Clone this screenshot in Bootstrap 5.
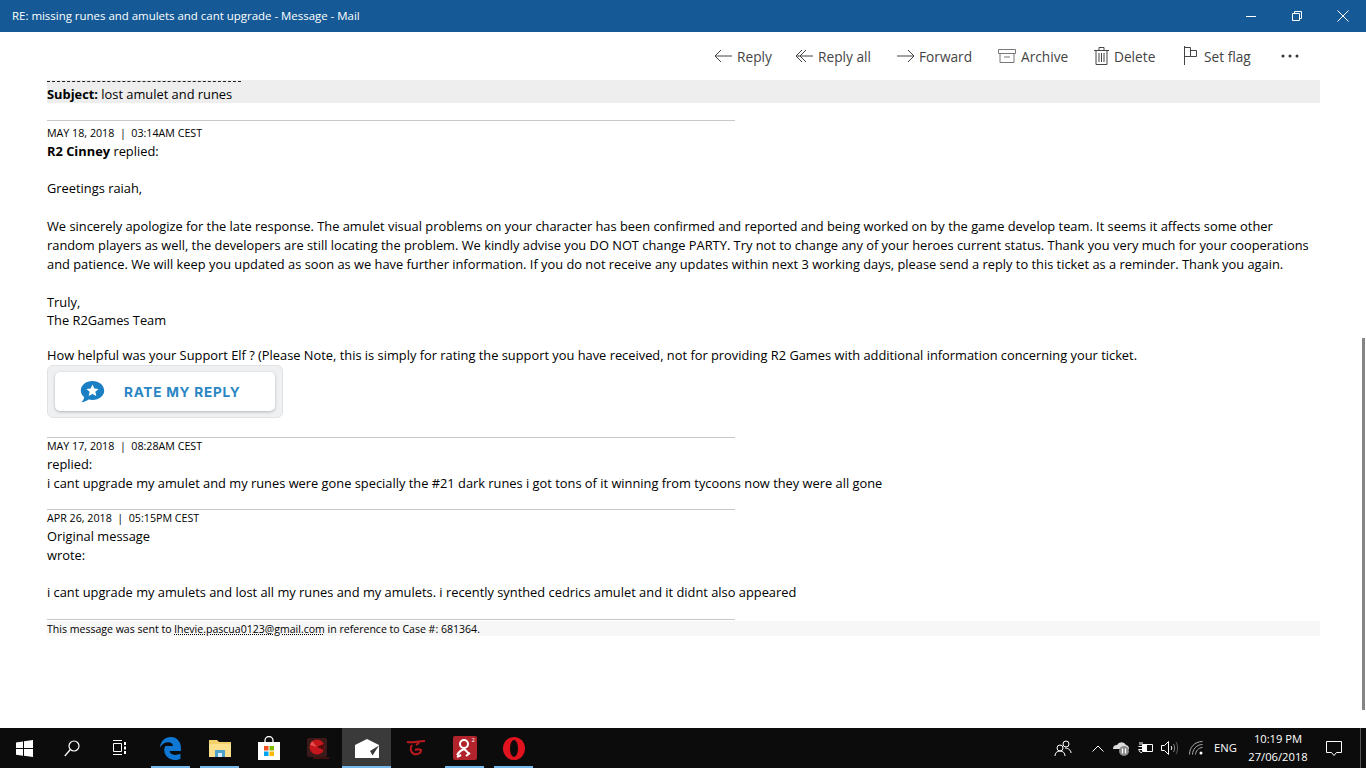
<!DOCTYPE html>
<html lang="en">
<head>
    <meta charset="UTF-8">
    <title>RE: missing runes and amulets and cant upgrade - Message - Mail</title>
    <link rel="stylesheet" href="https://cdn.jsdelivr.net/npm/bootstrap@5.3.0/dist/css/bootstrap.min.css">
    <style>
        html, body { height: 100%; overflow: hidden; }
        body { font-family: "Open Sans", "Noto Sans", sans-serif; color: #000; background: #fff; }

        .title-bar { height: 32px; background: #155a96; color: #fff; font-size: 11.45px; padding-left: 12px; }
        .win-btn { width: 46px; height: 32px; }

        .mail-toolbar { height: 48px; padding-right: 67px; gap: 25px; font-size: 13.7px; color: #444; }
        .tool-item { gap: 5px; }
        .tool-item span { white-space: nowrap; margin-top: 2px; }
        .tool-item svg { stroke: #444; fill: none; stroke-width: 1; flex: none; }
        .tool-reply span { width: 34px; }
        .tool-replyall { margin-left: -1px; }
        .tool-replyall span { width: 54px; }
        .tool-forward { gap: 4px; }
        .tool-forward span { width: 53px; }
        .tool-archive { margin-left: 1px; }
        .tool-archive span { width: 47px; }
        .tool-delete { margin-left: 1px; }
        .tool-delete span { width: 42px; }
        .tool-flag { margin-left: 2px; gap: 6px; }
        .tool-flag span { width: 48px; }
        .tool-more { margin-left: 4px; }

        .mail-body { height: 648px; padding-left: 47px; padding-right: 46px; font-size: 12.85px; line-height: 19px; position: relative; }
        .clipped-line { width: 194px; height: 2px; padding-top: 1px; }
        .clipped-line div { border-top: 1px dashed #222; }
        .subject-band { background: #eee; height: 23px; }
        .subject-text { padding-top: 3px; }
        .rule { width: 688px; height: 1px; background: #c8c8c8; }
        .rule-first { margin-top: 17px; }
        .rule-rate { margin-top: 19px; }
        .rule-mid { margin-top: 16px; }
        .rule-end { margin-top: 17px; }
        .stamp { font-size: 10.7px; line-height: 15px; margin-top: 5px; margin-bottom: 1px; }
        .stamp-tight { margin-top: 1px; margin-bottom: 2px; line-height: 14px; }
        .gap-line { height: 19px; }
        .gap-short { height: 18px; }
        .line-short { line-height: 18px; }

        .rate-box { width: 236px; height: 53px; background: #eef0f2; border: 1px solid #dfe2e5; border-radius: 6px; padding: 6px 7px; }
        .rate-inner { height: 39px; background: #fff; border-radius: 5px; box-shadow: 0 1px 3px rgba(0,0,0,.25); padding-left: 25px; gap: 19px; }
        .rate-text { font-family: "Inter", "Liberation Sans", sans-serif; font-weight: 700; font-size: 13.6px; letter-spacing: .75px; color: #2a86c4; white-space: nowrap; margin-top: 2px; }

        .footer-band { background: #f7f7f7; font-size: 10.55px; height: 15px; line-height: 17px; margin-top: 1px; }
        .footer-band u { text-decoration: underline dotted; }

        .scroll-thumb { position: absolute; right: 1px; top: 258px; width: 3px; height: 372px; background: #858585; }

        .task-bar { height: 40px; background: #0c0c0c; color: #fff; }
        .task-btn { width: 49px; height: 40px; position: relative; flex: none; }
        .task-btn.narrow { width: 48px; }
        .task-btn.first-app { margin-left: 2px; }
        .task-btn.running::after { content: ""; position: absolute; left: 5px; right: 5px; bottom: 0; height: 2px; background: #76b9ed; }
        .task-btn.current { background: #3a3a3a; }
        .task-btn.current::after { left: 0; right: 0; }
        .tray-item { height: 40px; width: 24px; flex: none; }
        .tray-people { margin-right: 11px; }
        .tray-wifi { margin-left: 3px; }
        .tray-lang { width: 33px; font-size: 11.2px; }
        .tray-clock { width: 72px; font-size: 11.2px; line-height: 18px; text-align: center; }
        .tray-note { width: 40px; }
        .show-desktop { width: 6px; height: 40px; margin-left: 6px; border-left: 1px solid #555; flex: none; }
    </style>
</head>
<body>
    <div class="title-bar d-flex align-items-center">
        <span class="flex-grow-1">RE: missing runes and amulets and cant upgrade - Message - Mail</span>
        <div class="win-btn d-flex align-items-center justify-content-center">
            <svg width="12" height="12" viewBox="0 0 12 12"><path d="M1 6.500h10" stroke="#fff"/></svg>
        </div>
        <div class="win-btn d-flex align-items-center justify-content-center">
            <svg width="12" height="12" viewBox="0 0 12 12" fill="none" stroke="#fff"><path d="M1.500 3.500h7v7h-7zM3.500 3.500v-2h7v7h-2"/></svg>
        </div>
        <div class="win-btn d-flex align-items-center justify-content-center">
            <svg width="12" height="12" viewBox="0 0 12 12"><path d="M.5.5l11 11M11.500.5l-11 11" stroke="#fff"/></svg>
        </div>
    </div>

    <div class="mail-toolbar d-flex align-items-center justify-content-end">
        <div class="tool-item tool-reply d-flex align-items-center">
            <svg width="18" height="14" viewBox="0 0 18 14"><path d="M18 7H1M7 1L1 7l6 6"/></svg>
            <span>Reply</span>
        </div>
        <div class="tool-item tool-replyall d-flex align-items-center">
            <svg width="18" height="14" viewBox="0 0 18 14"><path d="M18 7H1M7 1L1 7l6 6M11 1L5 7l6 6"/></svg>
            <span>Reply all</span>
        </div>
        <div class="tool-item tool-forward d-flex align-items-center">
            <svg width="18" height="14" viewBox="0 0 18 14"><path d="M0 7h17M11 1l6 6-6 6"/></svg>
            <span>Forward</span>
        </div>
        <div class="tool-item tool-archive d-flex align-items-center">
            <svg width="18" height="16" viewBox="0 0 18 16"><path d="M.5 1.500h17v4H.5zM2 5.500v9h14v-9M6 9h6" stroke="#777"/></svg>
            <span>Archive</span>
        </div>
        <div class="tool-item tool-delete d-flex align-items-center">
            <svg width="15" height="18" viewBox="0 0 15 18"><path d="M0 3.500h15M2 3.500v14h11v-14M5 3.500V.5h5v3M5 6v9M7.500 6v9M10 6v9"/></svg>
            <span>Delete</span>
        </div>
        <div class="tool-item tool-flag d-flex align-items-center">
            <svg width="15" height="19" viewBox="0 0 15 19"><path d="M1.500 0v19M1.500 1.500h6v9h-6M7.500 4.500h6v6h-6"/></svg>
            <span>Set flag</span>
        </div>
        <svg class="tool-more" width="18" height="4" viewBox="0 0 18 4" fill="#333"><circle cx="2" cy="2" r="1.500"/><circle cx="9" cy="2" r="1.500"/><circle cx="16" cy="2" r="1.500"/></svg>
    </div>

    <div class="mail-body overflow-hidden">
        <div class="subject-band">
            <div class="clipped-line"><div></div></div>
            <div class="subject-text"><strong>Subject:</strong> lost amulet and runes</div>
        </div>

        <div class="rule rule-first"></div>
        <div class="stamp">MAY 18, 2018 &nbsp;|&nbsp; 03:14AM CEST</div>
        <div><strong>R2 Cinney</strong> replied:</div>
        <div class="gap-short"></div>
        <div>Greetings raiah,</div>
        <div class="gap-line"></div>
        <div>We sincerely apologize for the late response. The amulet visual problems on your character has been confirmed and reported and being worked on by the game develop team. It seems it affects some other<br>random players as well, the developers are still locating the problem. We kindly advise you DO NOT change PARTY. Try not to change any of your heroes current status. Thank you very much for your cooperations<br>and patience. We will keep you updated as soon as we have further information. If you do not receive any updates within next 3 working days, please send a reply to this ticket as a reminder. Thank you again.</div>
        <div class="gap-line"></div>
        <div class="line-short">Truly,</div>
        <div>The R2Games Team</div>
        <div class="mt-3">How helpful was your Support Elf ? (Please Note, this is simply for rating the support you have received, not for providing R2 Games with additional information concerning your ticket.</div>

        <div class="rate-box">
            <div class="rate-inner d-flex align-items-center">
                <svg width="25" height="24" viewBox="0 0 25 24">
                    <path d="M12.500 1C5.900 1 .8 5.200.8 10.600c0 2.700 1.300 5 3.400 6.700-.3 1.900-1.500 3.800-2.800 5 2.800-.2 5.300-1.300 7.200-2.700 1.200.3 2.500.4 3.900.4 6.600 0 11.700-4.200 11.700-9.400S19.100 1 12.500 1z" fill="#1b7fc4"/>
                    <path d="M12.500 4.500l1.800 4 4.300.4-3.200 2.900.9 4.300-3.800-2.200-3.800 2.200.9-4.300-3.200-2.900 4.300-.4z" fill="#fff"/>
                </svg>
                <span class="rate-text">RATE MY REPLY</span>
            </div>
        </div>

        <div class="rule rule-rate"></div>
        <div class="stamp stamp-tight">MAY 17, 2018 &nbsp;|&nbsp; 08:28AM CEST</div>
        <div>replied:</div>
        <div>i cant upgrade my amulet and my runes were gone specially the #21 dark runes i got tons of it winning from tycoons now they were all gone</div>

        <div class="rule rule-mid"></div>
        <div class="stamp stamp-tight">APR 26, 2018 &nbsp;|&nbsp; 05:15PM CEST</div>
        <div>Original message</div>
        <div>wrote:</div>
        <div class="gap-short"></div>
        <div>i cant upgrade my amulets and lost all my runes and my amulets. i recently synthed cedrics amulet and it didnt also appeared</div>

        <div class="rule rule-end"></div>
        <div class="footer-band">This message was sent to <u>lhevie.pascua0123@gmail.com</u> in reference to Case #: 681364.</div>

        <div class="scroll-thumb"></div>
    </div>

    <div class="task-bar d-flex">
        <div class="task-btn narrow d-flex align-items-center justify-content-center">
            <svg width="17" height="17" viewBox="0 0 17 17" fill="#fff"><path d="M0 2.400l7-1v6.700H0zM8 1.200l9-1.200v8.100H8zM0 9h7v6.700l-7-1zM8 9h9v8l-9-1.200z"/></svg>
        </div>
        <div class="task-btn narrow d-flex align-items-center justify-content-center">
            <svg width="16" height="17" viewBox="0 0 16 17" fill="none" stroke="#fff" stroke-width="1.200"><circle cx="10" cy="6" r="5"/><path d="M6.300 9.500L.8 16"/></svg>
        </div>
        <div class="task-btn narrow d-flex align-items-center justify-content-center">
            <svg width="16" height="16" viewBox="0 0 16 16" fill="none" stroke="#fff"><path d="M1 .5h9M1.500 3.500h8v8h-8zM1 14.500h9"/><path d="M13 2v3M13 6.500v3M13 11v3" stroke-width="2"/></svg>
        </div>
        <div class="task-btn first-app running d-flex align-items-center justify-content-center">
            <svg width="21" height="23" viewBox="0 0 20 22"><path d="M10.500 0C4.500 0 .3 4.500 0 10c1.700-3.200 4.800-5 7.800-5 2.600 0 4.500 1.500 4.500 3.700H5.700c-.3-.1-.5 0-.6 0C4.200 10.200 4 11.500 4 12.500 4 18.500 9.500 22 14 22c2.200 0 4.200-.5 5.500-1.300v-4.900c-1.400.9-3.200 1.400-5 1.400-3 0-5.300-1.400-5.300-3.700H20v-3C20 4.500 16 0 10.500 0z" fill="#0f78d4"/></svg>
        </div>
        <div class="task-btn running d-flex align-items-center justify-content-center">
            <svg width="22" height="19" viewBox="0 0 22 19"><path d="M0 1h8l2 2h12v15H0z" fill="#f3cf6b"/><path d="M0 5h22v13H0z" fill="#fbe08e"/><path d="M6 11h10v7H6z" fill="#4da3c9"/><path d="M9 14h4v4H9z" fill="#d9f0f7"/></svg>
        </div>
        <div class="task-btn d-flex align-items-center justify-content-center">
            <svg width="22" height="24" viewBox="0 0 22 24"><path d="M7 7V4.500a4 4 0 0 1 8 0V7" fill="none" stroke="#fff" stroke-width="1.300"/><path d="M0 6h22v18H0z" fill="#fff"/><path d="M6 10h4.500v4.500H6z" fill="#f25022"/><path d="M11.500 10H16v4.500h-4.500z" fill="#7fba00"/><path d="M6 15.500h4.500V20H6z" fill="#00a4ef"/><path d="M11.500 15.500H16V20h-4.500z" fill="#ffb900"/></svg>
        </div>
        <div class="task-btn d-flex align-items-center justify-content-center">
            <svg width="22" height="23" viewBox="0 0 22 23"><rect y="1" width="20" height="19" rx="2" fill="#3d1a1a"/><circle cx="10" cy="10" r="7.500" fill="#c4161c"/><path d="M10 10l7-3v6z" fill="#4a0c0e"/><path d="M10 10L5 4l-2 4z" fill="#e85050"/><path d="M6 21h16" stroke="#7a1414"/></svg>
        </div>
        <div class="task-btn current running d-flex align-items-center justify-content-center">
            <svg width="24" height="19" viewBox="0 0 24 19"><path d="M0 6L12 0l12 6v13H0z" fill="#fff"/><path d="M0 6.500L15 12l9-5.500-6.500 10L15 12z" fill="#3a3a3a"/></svg>
        </div>
        <div class="task-btn d-flex align-items-center justify-content-center">
            <svg width="20" height="16" viewBox="0 0 20 16" fill="none" stroke="#c01a20" stroke-width="2"><path d="M1 2c5 1 12-1 18-1M6 5c-2 3-2 7 2 9 4 1 7-1 7-4-2-1-4-1-6 0"/><path d="M13 3l-3 2"/></svg>
        </div>
        <div class="task-btn running d-flex align-items-center justify-content-center">
            <svg width="24" height="24" viewBox="0 0 24 24"><rect width="24" height="24" rx="2" fill="#b2242b"/><circle cx="11" cy="8" r="4" fill="none" stroke="#fff" stroke-width="2"/><path d="M4 19c2-3 4-5 7-6 2 1 3 3 5 5M4 21l4-2M13 20l4-3" fill="none" stroke="#fff" stroke-width="2"/><text x="18.500" y="6" font-size="6" fill="#fff" font-family="Open Sans, sans-serif">2</text></svg>
        </div>
        <div class="task-btn running d-flex align-items-center justify-content-center">
            <svg width="22" height="23" viewBox="0 0 22 23"><ellipse cx="11" cy="11.500" rx="11" ry="11.500" fill="#e0131e"/><ellipse cx="11" cy="11.500" rx="4" ry="8.500" fill="#0c0c0c"/></svg>
        </div>

        <div class="d-flex align-items-center ms-auto">
            <div class="tray-item tray-people d-flex align-items-center justify-content-center">
                <svg width="18" height="17" viewBox="0 0 18 17" fill="none" stroke="#fff"><circle cx="6" cy="8" r="3"/><path d="M1 16c0-3 2-5 5-5s5 2 5 5"/><circle cx="12" cy="4" r="3"/><path d="M11 8c3 0 6 2 6 5"/></svg>
            </div>
            <div class="tray-item d-flex align-items-center justify-content-center">
                <svg width="12" height="7" viewBox="0 0 12 7" fill="none" stroke="#fff"><path d="M.5 6.500L6 1l5.500 5.500"/></svg>
            </div>
            <div class="tray-item d-flex align-items-center justify-content-center">
                <svg width="18" height="16" viewBox="0 0 18 16"><path d="M0 9a4 4 0 0 1 4-4 5 5 0 0 1 9 0 4 4 0 0 1 3 4H0z" fill="#ddd"/><circle cx="11" cy="11" r="5" fill="#8a8a8a"/><path d="M9.500 8.500v5M12.500 8.500v5" stroke="#fff" stroke-width="1.300"/></svg>
            </div>
            <div class="tray-item d-flex align-items-center justify-content-center">
                <svg width="16" height="14" viewBox="0 0 16 14" fill="none" stroke="#fff"><path d="M4.500 3.500h10v7h-10zM.5 5.500h4M.5 8.500h4M2 1v3M4 1v3M1 8.500c0 2 1 3 3 3"/><path d="M5 4h4v6H5z" fill="#fff" stroke="none"/></svg>
            </div>
            <div class="tray-item d-flex align-items-center justify-content-center">
                <svg width="18" height="16" viewBox="0 0 18 16" fill="none" stroke="#fff"><path d="M.5 5.500h3l4-4v13l-4-4h-3z"/><path d="M10 6c1 1 1 3 0 4"/><path d="M12.500 4c1.500 2 1.500 6 0 8" stroke="#888"/><path d="M15 2c2 3 2 9 0 12" stroke="#666"/></svg>
            </div>
            <div class="tray-item tray-wifi d-flex align-items-center justify-content-center">
                <svg width="16" height="14" viewBox="0 0 16 14" fill="none" stroke="#aaa"><path d="M.5 13.500c0-7 5-13 13-13M3.500 13.500c0-5 4-10 10-10M6.500 13.500c0-3 3-7 7-7"/><circle cx="12" cy="12" r="1.500" fill="#fff" stroke="none"/></svg>
            </div>
            <div class="tray-item tray-lang d-flex align-items-center justify-content-center">ENG</div>
            <div class="tray-item tray-clock d-flex flex-column justify-content-center">
                <span>10:19 PM</span>
                <span>27/06/2018</span>
            </div>
            <div class="tray-item tray-note d-flex align-items-center justify-content-center">
                <svg width="16" height="15" viewBox="0 0 16 15" fill="none" stroke="#fff"><path d="M.5.500h15v11h-5l-2.500 3-2.500-3h-5z"/></svg>
            </div>
            <div class="show-desktop"></div>
        </div>
    </div>
</body>
</html>
